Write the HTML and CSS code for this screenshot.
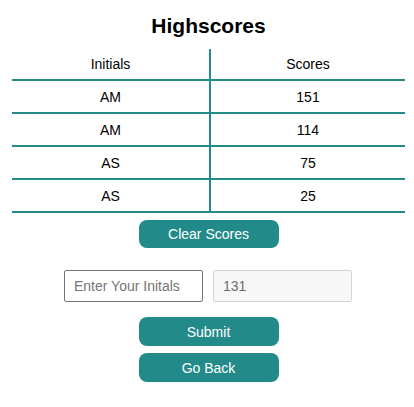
FILE: index.html
```html
<!DOCTYPE html>
<html lang="en">
<head>
<meta charset="utf-8">
<title>Highscores</title>
<link rel="stylesheet" href="styles.css">
</head>
<body>
<main class="page">
  <h1 class="title">Highscores</h1>
  <table class="scores">
    <thead>
      <tr><th>Initials</th><th>Scores</th></tr>
    </thead>
    <tbody>
      <tr><td>AM</td><td>151</td></tr>
      <tr><td>AM</td><td>114</td></tr>
      <tr><td>AS</td><td>75</td></tr>
      <tr><td>AS</td><td>25</td></tr>
    </tbody>
  </table>
  <button class="btn btn-clear" type="button">Clear Scores</button>
  <form class="entry">
    <div class="inputs">
      <input class="field" type="text" placeholder="Enter Your Initals">
      <input class="field field-score" type="text" value="131" disabled>
    </div>
    <button class="btn" type="button">Submit</button>
    <button class="btn btn-back" type="button">Go Back</button>
  </form>
</main>
</body>
</html>
```

FILE: styles.css
```css
html, body {
  margin: 0;
  padding: 0;
  background: #ffffff;
}

body {
  font-family: "Liberation Sans", Arial, sans-serif;
  font-size: 14px;
  color: #000;
}

.page {
  display: flex;
  flex-direction: column;
  align-items: center;
  padding-top: 14px;
}

.title {
  margin: 0 0 11px 3px;
  font-size: 21px;
  line-height: 24px;
  font-weight: bold;
}

.scores {
  width: 393px;
  margin-left: 3px;
  border-collapse: collapse;
  table-layout: fixed;
}

.scores th,
.scores td {
  font-weight: normal;
  text-align: center;
  padding: 0;
  height: 31px;
  border-bottom: 2px solid #238a8a;
}

.scores th:first-child,
.scores td:first-child {
  width: 197px;
  border-right: 2px solid #238a8a;
}

.scores th {
  height: 30px;
}

.btn {
  display: block;
  width: 140px;
  height: 29px;
  border: none;
  border-radius: 8px;
  background: #238a8a;
  color: #ffffff;
  font-family: "Liberation Sans", Arial, sans-serif;
  font-size: 14px;
  padding: 0;
  margin-left: 3px;
}

.btn-clear {
  margin-top: 7px;
  height: 28px;
}

.entry {
  display: flex;
  flex-direction: column;
  align-items: center;
  margin-top: 22px;
}

.inputs {
  display: flex;
  gap: 10px;
  margin-left: 2px;
  margin-bottom: 15px;
}

.field {
  box-sizing: border-box;
  width: 139px;
  height: 32px;
  padding: 0 9px;
  border: 1px solid #767676;
  border-radius: 2px;
  font-family: "Liberation Sans", Arial, sans-serif;
  font-size: 14px;
  background: #fff;
}

.field::placeholder {
  color: #757575;
}

.field-score {
  background: #f7f7f7;
  border-color: #d4d4d4;
  color: #6d6d6d;
}

.btn-back {
  margin-top: 7px;
}
```
